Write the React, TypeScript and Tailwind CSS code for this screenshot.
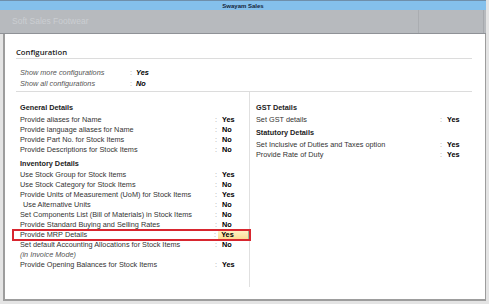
import React from "react";

type Row = { label: string; value?: string; indent?: boolean; italic?: boolean };

const general: Row[] = [
  { label: "Provide aliases for Name", value: "Yes" },
  { label: "Provide language aliases for Name", value: "No" },
  { label: "Provide Part No. for Stock Items", value: "No" },
  { label: "Provide Descriptions for Stock Items", value: "No" },
];

const inventoryTop: Row[] = [
  { label: "Use Stock Group for Stock Items", value: "Yes" },
  { label: "Use Stock Category for Stock Items", value: "No" },
  { label: "Provide Units of Measurement (UoM) for Stock Items", value: "Yes" },
  { label: "Use Alternative Units", value: "No", indent: true },
  { label: "Set Components List (Bill of Materials) in Stock Items", value: "No" },
  { label: "Provide Standard Buying and Selling Rates", value: "No" },
];

const inventoryBottom: Row[] = [
  { label: "Set default Accounting Allocations for Stock Items", value: "No" },
  { label: "(in Invoice Mode)", italic: true },
  { label: "Provide Opening Balances for Stock Items", value: "Yes" },
];

const LeftRow = ({ row }: { row: Row }) => (
  <div className="flex h-[10px] items-center leading-[10px]">
    <div
      className={`w-[195px] text-[#333] ${row.indent ? "pl-[3px]" : ""} ${
        row.italic ? "italic text-[#555]" : ""
      }`}
    >
      {row.label}
    </div>
    {row.value && (
      <>
        <span className="text-[#999]">:</span>
        <span className="ml-[5px] font-bold text-black">{row.value}</span>
      </>
    )}
  </div>
);

const RightRow = ({ row }: { row: Row }) => (
  <div className="flex h-[10px] items-center leading-[10px]">
    <div className="w-[184px] text-[#333]">{row.label}</div>
    <span className="text-[#999]">:</span>
    <span className="ml-[5px] font-bold text-black">{row.value}</span>
  </div>
);

const Heading = ({ children }: { children: React.ReactNode }) => (
  <div className="h-[12px] leading-[12px] font-bold text-[#222]">{children}</div>
);

export default function App() {
  return (
    <div
      className="w-[489px] h-[304px] overflow-hidden bg-[#e4e4e4] text-[7.3px]"
      style={{ fontFamily: '"Liberation Sans", Arial, sans-serif' }}
    >
      {/* title bar */}
      <div className="w-[486px] h-[10px] border-t border-[#6f8fab] bg-[#84c0ec] flex items-center justify-center">
        <span className="text-[6px] font-bold leading-none text-[#14253a]">Swayam Sales</span>
      </div>

      {/* company band */}
      <div className="w-[486px] h-[24px] bg-[#b7babe] border-b border-[#8f9297] flex">
        <div className="flex-1 pl-[12px] pt-[5px] text-[8.5px] text-[#cbced2]">Soft Sales Footwear</div>
        <div className="w-[65px] border-l border-[#aaadb1]" />
        <div className="w-[3px] border-l border-[#a6a9ad]" />
      </div>

      {/* main panel */}
      <div className="ml-[3px] w-[483px] h-[267px] bg-white border-l-2 border-r border-b-2 border-[#9d9d9d]">
        {/* configuration */}
        <div className="pl-[11px] pt-[12px]">
          <div
            className="h-[12px] leading-[12px] text-[7.7px] font-semibold text-[#222]"
            style={{ fontFamily: '"Open Sans", "Liberation Sans", sans-serif' }}
          >
            Configuration
          </div>
        </div>
        <div className="ml-[11px] w-[456px] border-b border-[#dcdcdc]" />
        <div className="pl-[15px] pt-[8px]">
          {[
            ["Show more configurations", "Yes"],
            ["Show all configurations", "No"],
          ].map(([l, v]) => (
            <div key={l} className="flex h-[11px] items-center leading-[11px]">
              <div className="w-[110px] italic text-[#555]">{l}</div>
              <span className="text-[#999]">:</span>
              <span className="ml-[4px] font-bold italic text-black">{v}</span>
            </div>
          ))}
        </div>
        <div className="mt-[2px] ml-[11px] w-[456px] border-b border-[#dcdcdc]" />

        {/* two columns */}
        <div className="flex">
          <div className="w-[244px] h-[195px] pl-[15px] pt-[10px]">
            <Heading>General Details</Heading>
            <div className="h-[1px]" />
            {general.map((r) => (
              <LeftRow key={r.label} row={r} />
            ))}
            <div className="h-[3px]" />
            <Heading>Inventory Details</Heading>
            {inventoryTop.map((r) => (
              <LeftRow key={r.label} row={r} />
            ))}
            {/* highlighted row */}
            <div className="relative flex h-[10px] items-center leading-[10px]">
              <div className="w-[195px] text-[#333]">Provide MRP Details</div>
              <span className="text-[#999]">:</span>
              <div className="h-[10px] w-[31px] ml-[2px] pl-[3px] flex items-center bg-gradient-to-b from-[#fff2c8] to-[#fbd88e] border-r border-[#9bb79b]">
                <span className="font-bold text-black">Yes</span>
              </div>
              <div className="absolute -left-[8px] -top-[1px] w-[239px] h-[12px] border-2 border-[#d8262f]" />
            </div>
            {inventoryBottom.map((r) => (
              <LeftRow key={r.label} row={r} />
            ))}
          </div>
          <div className="w-[236px] h-[195px] border-l border-[#e0e0e0] pl-[6px] pt-[10px]">
            <Heading>GST Details</Heading>
            <div className="h-[1px]" />
            <RightRow row={{ label: "Set GST details", value: "Yes" }} />
            <div className="h-[2px]" />
            <Heading>Statutory Details</Heading>
            <div className="h-[1px]" />
            <RightRow row={{ label: "Set Inclusive of Duties and Taxes option", value: "Yes" }} />
            <RightRow row={{ label: "Provide Rate of Duty", value: "Yes" }} />
          </div>
        </div>
      </div>
    </div>
  );
}
